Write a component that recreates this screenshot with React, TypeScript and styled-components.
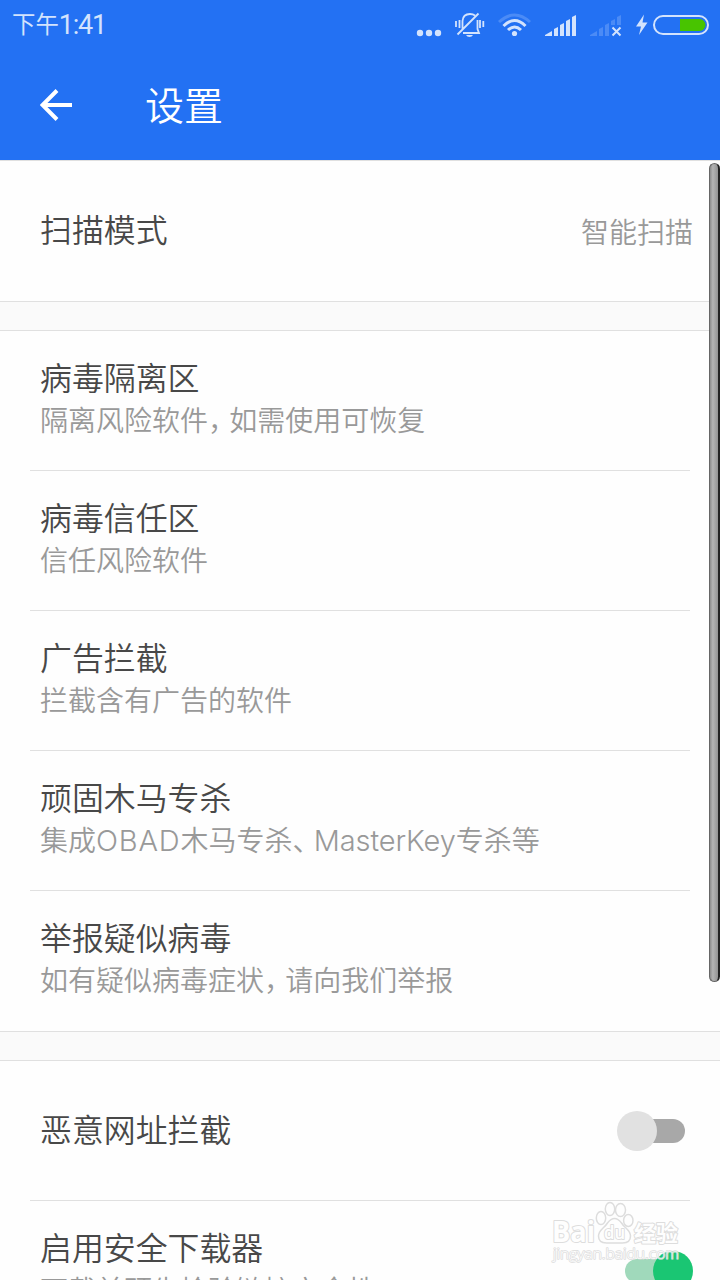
import React from 'react';
import styled, { createGlobalStyle } from 'styled-components';

const Global = createGlobalStyle`
  *, *::before, *::after { box-sizing: border-box; }
  html, body { margin: 0; padding: 0; height: 1280px; overflow: hidden; background: #fff; }
  body { font-family: "Noto Sans CJK SC", sans-serif; font-weight: 350; }
`;

const Screen = styled.main`
  position: relative;
  width: 720px;
  height: 1280px;
  overflow: hidden;
  background: #fefefe;
`;

const Header = styled.header`
  height: 160px;
  background: #2371f3;
  color: #fff;
`;

const StatusBar = styled.div`
  height: 50px;
  padding: 0 11px 0 12px;
  display: flex;
  align-items: flex-start;
  justify-content: space-between;
  color: #d3e3fd;
`;

const Clock = styled.span`
  display: flex;
  align-items: flex-start;
  font-size: 23.4px;
  line-height: 47px;
  font-weight: 400;
  white-space: nowrap;
`;

const ClockDigits = styled.span`
  font-family: Roboto, sans-serif;
  font-size: 27px;
  line-height: 50px;
  letter-spacing: -1.2px;
`;

const StatusIcons = styled.svg`
  display: block;
  width: 304px;
  height: 50px;
  margin-right: -11px;
`;

const TitleBar = styled.div`
  height: 110px;
  padding-left: 40px;
  display: flex;
  align-items: center;
`;

const BackArrow = styled.svg`
  width: 32px;
  height: 32px;
  margin-right: 73px;
`;

const PageTitle = styled.h1`
  margin: 0;
  padding-bottom: 5px;
  font-size: 39px;
  font-weight: 350;
  line-height: 58px;
`;

const Section = styled.section`
  border-top: 1px solid #e0e0e0;
  border-bottom: 1px solid #e0e0e0;
  background: #fefefe;
`;

const Gap = styled.div`
  height: 28px;
  background: #fafafa;
`;

const Row = styled.div`
  height: 140px;
  padding: 0 27px 0 40px;
  display: flex;
  align-items: center;
  justify-content: space-between;
`;

const RowText = styled.div`
  align-self: flex-start;
  padding-top: 22px;
`;

const Line = styled.hr`
  height: 1px;
  margin: -1px 30px 0;
  border: 0;
  background: #e0e0e0;
`;

const Title = styled.div<{ $single?: boolean }>`
  padding-bottom: ${(p) => (p.$single ? 6 : 0)}px;
  font-size: 31.9px;
  line-height: 46px;
  color: #484848;
  white-space: nowrap;
`;

const Note = styled.div<{ $single?: boolean }>`
  margin-top: ${(p) => (p.$single ? -1 : 1)}px;
  font-size: 28px;
  line-height: 38px;
  color: #999;
  white-space: nowrap;
`;

const Punct = styled.span`
  letter-spacing: -6.8px;
`;

const Latin = styled.span<{ $track?: number }>`
  font-family: Inter, sans-serif;
  font-size: 29px;
  font-weight: 300;
  line-height: 1;
  letter-spacing: ${(p) => p.$track ?? 0}px;
`;

const Toggle = styled.span<{ $on?: boolean }>`
  position: relative;
  width: 60px;
  height: 24px;
  margin-right: 8px;
  border-radius: 12px;
  background: ${(p) => (p.$on ? '#a0d9bb' : '#a8a8a8')};
  &::after {
    content: '';
    position: absolute;
    top: -8px;
    left: ${(p) => (p.$on ? '28px' : '-8px')};
    width: 40px;
    height: 40px;
    border-radius: 50%;
    background: ${(p) => (p.$on ? '#1ac673' : '#e1e1e1')};
  }
`;

const Scrollbar = styled.div`
  position: absolute;
  top: 163px;
  left: 709px;
  width: 11px;
  height: 819px;
  border-radius: 6px;
  border: 1px solid #666;
  border-right: 2px solid #222;
  background: linear-gradient(90deg, #8c8c8c, #b4b4b4 35%, #929292);
`;

const Watermark = styled.svg`
  position: absolute;
  left: 545px;
  top: 1195px;
  width: 145px;
  height: 75px;
  opacity: 0.85;
`;

export default function App() {
  return (
    <Screen>
      <Global />
      <Header>
        <StatusBar>
          <Clock>下午<ClockDigits>1:41</ClockDigits></Clock>
          <StatusIcons viewBox="416 0 304 50" fill="#d3e3fd">
            <circle cx="420" cy="33" r="3.2" />
            <circle cx="429" cy="33" r="3.2" />
            <circle cx="438" cy="33" r="3.2" />
            <g fill="none" stroke="#d3e3fd" strokeWidth="1.8">
              <path d="M462.500 29V21q.5-7 7.500-7q3 0 5 1.500M477.500 20v9l1.500 4H463M457.500 34.500L478.500 13.500" />
              <path d="M456 21v6M459.500 20v8M480 20v8M483.300 21v6" />
            </g>
            <path d="M466 35h7q-1 2-3.500 2t-3.500-2z" />
            <g fill="none" strokeWidth="3">
              <path stroke="#4b8bf6" d="M499 22q15.500-14 31 0" />
              <path stroke="#d3e3fd" d="M503.500 26q11-11 22 0M508 30q6.500-6 13 0" />
            </g>
            <circle cx="514.500" cy="33.500" r="2.600" />
            <path d="M545 36v-1l7-4v5zM554 36v-7l4-2v9zM560 36v-11l4-2v13zM566 36v-15l4-2v17zM572 36v-19l4-2v21z" />
            <path fill="#4b8bf6" d="M590 36v-1l7-4v5zM599 36v-7l4-2v9zM605 36v-11l4-2v13zM611 25v-4l4-2v6zM617 25v-8l4-2v10z" />
            <path d="M612.500 27.500l8 8M620.500 27.500l-8 8" stroke="#d3e3fd" strokeWidth="2" />
            <path d="M644 14.500l-8 12h5l-2 8.500 8.500-12.500h-5z" />
            <rect x="654" y="16" width="54" height="18" rx="9" fill="none" stroke="#d3e3fd" strokeWidth="2" />
            <path fill="#48c400" d="M680 19h19.500a6 6 0 010 12H680z" />
          </StatusIcons>
        </StatusBar>
        <TitleBar>
          <BackArrow viewBox="0 0 32 32" fill="none" stroke="#fff" strokeWidth="4">
            <path d="M32 16H3M17 1.500L2.500 16L17 30.500" />
          </BackArrow>
          <PageTitle>设置</PageTitle>
        </TitleBar>
      </Header>

      <Section>
        <Row>
          <Title $single>扫描模式</Title>
          <Note $single>智能扫描</Note>
        </Row>
      </Section>
      <Gap />
      <Section>
        <Row>
          <RowText>
            <Title>病毒隔离区</Title>
            <Note>隔离风险软件<Punct>，</Punct>如需使用可恢复</Note>
          </RowText>
        </Row>
        <Line />
        <Row>
          <RowText>
            <Title>病毒信任区</Title>
            <Note>信任风险软件</Note>
          </RowText>
        </Row>
        <Line />
        <Row>
          <RowText>
            <Title>广告拦截</Title>
            <Note>拦截含有广告的软件</Note>
          </RowText>
        </Row>
        <Line />
        <Row>
          <RowText>
            <Title>顽固木马专杀</Title>
            <Note>
              集成<Latin $track={0.8}>OBAD</Latin>木马专杀<Punct>、</Punct><Latin $track={-0.1}>MasterKey</Latin>专杀等
            </Note>
          </RowText>
        </Row>
        <Line />
        <Row>
          <RowText>
            <Title>举报疑似病毒</Title>
            <Note>如有疑似病毒症状<Punct>，</Punct>请向我们举报</Note>
          </RowText>
        </Row>
      </Section>
      <Gap />
      <Section>
        <Row>
          <Title $single>恶意网址拦截</Title>
          <Toggle />
        </Row>
        <Line />
        <Row>
          <RowText>
            <Title>启用安全下载器</Title>
            <Note>下载前预先检验链接安全性</Note>
          </RowText>
          <Toggle $on />
        </Row>
      </Section>

      <Scrollbar />
      <Watermark viewBox="545 1195 145 75" fill="#fff" stroke="#d8d8d8" strokeWidth="1.500" strokeLinejoin="round">
        <ellipse cx="601" cy="1218" rx="4.700" ry="6.500" />
        <ellipse cx="610" cy="1209" rx="4.700" ry="6.500" />
        <ellipse cx="620.500" cy="1210" rx="5" ry="6.500" />
        <ellipse cx="628.300" cy="1220.500" rx="4.700" ry="6" />
        <path d="M598.500 1236c0-6 6-8 9-13q7-9 14 0c3 5 9 7 9 13q0 7-8 7h-16q-8 0-8-7z" />
        <g paintOrder="stroke" strokeWidth="2" fontFamily='"Open Sans", "Noto Sans CJK SC", sans-serif'>
          <text x="552" y="1242" fontSize="28" fontWeight="700" textLength="43" lengthAdjust="spacingAndGlyphs">Bai</text>
          <text x="604" y="1239" fontSize="18" fontWeight="600" textLength="21" lengthAdjust="spacingAndGlyphs">du</text>
          <text x="634" y="1241" fontSize="22" fontWeight="700" textLength="44">经验</text>
          <text x="553" y="1259" fontSize="14.500" strokeWidth="1.500" textLength="126" lengthAdjust="spacingAndGlyphs">jingyan.baidu.com</text>
        </g>
      </Watermark>
    </Screen>
  );
}
